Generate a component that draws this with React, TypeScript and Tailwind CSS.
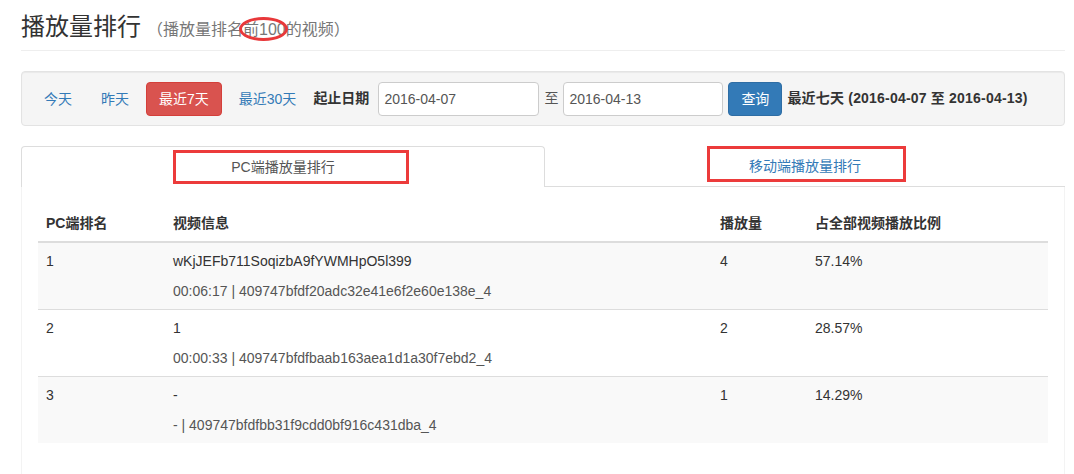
import React from "react";

const rows = [
  {
    rank: "1",
    title: "wKjJEFb711SoqizbA9fYWMHpO5l399",
    meta: "00:06:17 | 409747bfdf20adc32e41e6f2e60e138e_4",
    plays: "4",
    ratio: "57.14%",
  },
  {
    rank: "2",
    title: "1",
    meta: "00:00:33 | 409747bfdfbaab163aea1d1a30f7ebd2_4",
    plays: "2",
    ratio: "28.57%",
  },
  {
    rank: "3",
    title: "-",
    meta: "- | 409747bfdfbb31f9cdd0bf916c431dba_4",
    plays: "1",
    ratio: "14.29%",
  },
];

const quickRanges = [
  { label: "今天", active: false },
  { label: "昨天", active: false },
  { label: "最近7天", active: true },
  { label: "最近30天", active: false },
];

const App = () => {
  return (
    <div className="min-h-[474px] bg-white pl-[21px] pr-[9px] font-['Liberation_Sans','Noto_Sans_CJK_SC',sans-serif] text-[14px] text-[#333]">
      {/* Page header */}
      <div className="flex h-[51px] items-center border-b border-[#eee] pt-[6px]">
        <h1 className="text-[24px] leading-[26px] font-normal text-[#333]">
          播放量排行
          <small className="ml-[6px] text-[16px] leading-[26px] text-[#777]">
            （播放量排名
            <span className="relative inline-block leading-[20px]">
              前100
              <span className="absolute -left-[4px] -right-[2px] -top-[3px] -bottom-[1px] rounded-[50%] border-[3px] border-[#e8383a]" />
            </span>
            的视频）
          </small>
        </h1>
      </div>

      {/* Filter bar */}
      <div className="mt-[20px] flex h-[55px] items-center gap-[5px] rounded-[4px] border border-[#e3e3e3] bg-[#f5f5f5] pl-[10px] shadow-[inset_0_1px_1px_rgba(0,0,0,0.05)]">
        {quickRanges.map((r) => (
          <button
            key={r.label}
            className={
              r.active
                ? "h-[34px] rounded-[4px] border border-[#d43f3a] bg-[#d9534f] px-[12px] leading-[20px] text-white"
                : "h-[34px] rounded-[4px] px-[12px] leading-[20px] text-[#337ab7]"
            }
          >
            {r.label}
          </button>
        ))}
        <span className="mr-[4px] font-bold text-[#333]">起止日期</span>
        <input
          readOnly
          value="2016-04-07"
          className="h-[34px] w-[161px] rounded-[4px] border border-[#ccc] bg-white px-[5px] text-[#555] outline-none"
        />
        <span className="text-[#555]">至</span>
        <input
          readOnly
          value="2016-04-13"
          className="h-[34px] w-[160px] rounded-[4px] border border-[#ccc] bg-white px-[5px] text-[#555] outline-none"
        />
        <button className="h-[34px] rounded-[4px] border border-[#2e6da4] bg-[#337ab7] px-[12px] leading-[20px] text-white">
          查询
        </button>
        <span className="font-bold tracking-[0.2px] text-[#333]">最近七天 (2016-04-07 至 2016-04-13)</span>
      </div>

      {/* Tabs */}
      <div className="mt-[20px] flex">
        <div className="flex h-[41px] w-[524px] items-center justify-center rounded-t-[4px] border border-b-0 border-[#ddd] bg-white">
          <span className="relative leading-[20px] text-[#555]">
            PC端播放量排行
            <span className="absolute -left-[58px] -right-[74px] -top-[7px] -bottom-[7px] border-[3px] border-[#ec3b3b]" />
          </span>
        </div>
        <div className="flex h-[41px] flex-1 items-center justify-center border-b border-[#ddd]">
          <span className="relative leading-[20px] text-[#337ab7]">
            移动端播放量排行
            <span className="absolute -left-[42px] -right-[45px] -top-[10px] -bottom-[6px] border-[3px] border-[#ec3b3b]" />
          </span>
        </div>
      </div>

      {/* Tab content */}
      <div className="min-h-[287px] border-x border-[#f3f3f3] px-[16px] pt-[18px]">
        <table className="w-full border-collapse text-left">
          <thead>
            <tr>
              <th className="w-[127px] border-b-2 border-[#ddd] p-[8px] leading-[20px] font-bold">PC端排名</th>
              <th className="w-[547px] border-b-2 border-[#ddd] p-[8px] leading-[20px] font-bold">视频信息</th>
              <th className="w-[95px] border-b-2 border-[#ddd] p-[8px] leading-[20px] font-bold">播放量</th>
              <th className="border-b-2 border-[#ddd] p-[8px] leading-[20px] font-bold">占全部视频播放比例</th>
            </tr>
          </thead>
          <tbody>
            {rows.map((row, i) => (
              <tr
                key={row.rank}
                className={
                  i % 2 === 0
                    ? i === 0
                      ? "bg-[#f9f9f9]"
                      : "border-t border-[#ddd] bg-[#f9f9f9]"
                    : "border-t border-[#ddd] bg-white"
                }
              >
                <td className="p-[8px] align-top leading-[20px]">{row.rank}</td>
                <td className="p-[8px] align-top leading-[20px]">
                  <div>{row.title}</div>
                  <div className="mt-[10px] text-[#555]">{row.meta}</div>
                </td>
                <td className="p-[8px] align-top leading-[20px]">{row.plays}</td>
                <td className="p-[8px] align-top leading-[20px]">{row.ratio}</td>
              </tr>
            ))}
          </tbody>
        </table>
      </div>
    </div>
  );
};

export default App;
